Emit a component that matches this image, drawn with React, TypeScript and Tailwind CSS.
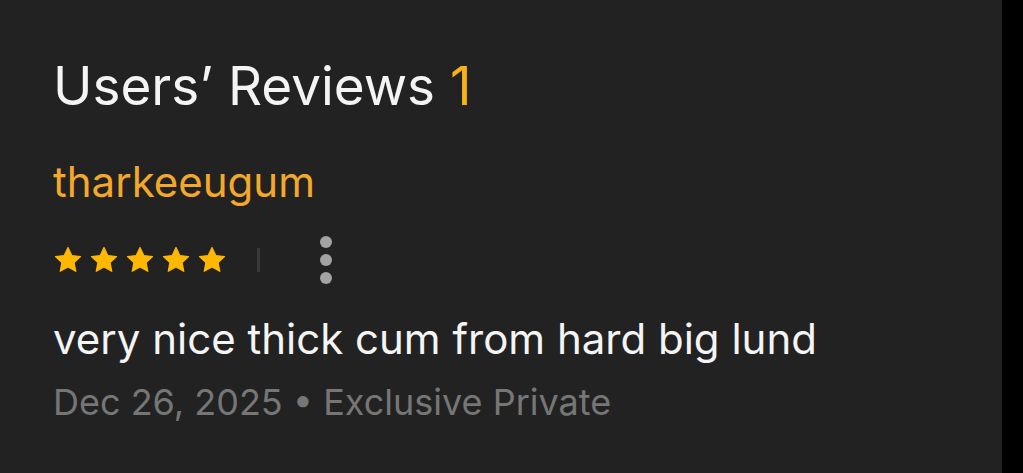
const Star = () => (
  <svg width="30" height="28" viewBox="0 0 24 23" className="shrink-0">
    <path
      d="M12 1.2l3.1 6.6 7.2.9-5.3 5 1.4 7.1L12 17.3l-6.4 3.5 1.4-7.1-5.3-5 7.2-.9z"
      fill="#ffb800"
      stroke="#ffb800"
      strokeWidth="1"
      strokeLinejoin="round"
    />
  </svg>
);

export default function App() {
  return (
    <div className="flex h-[473px] w-[1023px] bg-black" style={{ fontFamily: "Inter, 'Noto Sans', sans-serif" }}>
      <div className="flex w-[1002px] flex-col bg-[#222222] px-[53px] pt-[56px]">
        {/* Header */}
        <h2 className="text-[53px] leading-[60px] text-[#f4f4f4]">
          Users’ Reviews <span className="text-[#f8b116]">1</span>
        </h2>

        {/* Review */}
        <div className="mt-[41px] text-[42px] leading-[50px] text-[#f4a82a]">tharkeeugum</div>

        <div className="mt-[29px] flex h-[48px] items-center">
          <div className="flex items-center gap-[6px]">
            <Star />
            <Star />
            <Star />
            <Star />
            <Star />
          </div>
          <div className="ml-[30px] h-[24px] w-[3px] bg-[#3a3a3a]" />
          <button className="ml-[60px] flex flex-col items-center gap-[6px]">
            <span className="size-[12px] rounded-full bg-[#a3a3a3]" />
            <span className="size-[12px] rounded-full bg-[#a3a3a3]" />
            <span className="size-[12px] rounded-full bg-[#a3a3a3]" />
          </button>
        </div>

        <p className="mt-[30px] text-[42px] leading-[50px] text-[#f4f4f4]">
          very nice thick cum from hard big lund
        </p>
        <div className="mt-[13px] text-[36px] leading-[50px] text-[#767676]">
          Dec 26, 2025 • Exclusive Private
        </div>
      </div>
    </div>
  );
}
